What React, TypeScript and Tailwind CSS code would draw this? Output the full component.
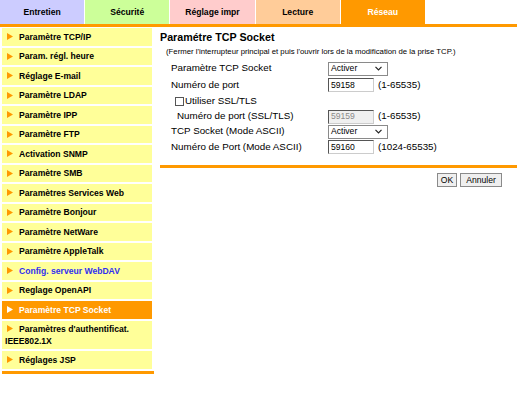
import React from 'react'

const tabs = [
  { label: 'Entretien', bg: 'bg-[#ccccff]', text: 'text-black' },
  { label: 'Sécurité', bg: 'bg-[#ccff99]', text: 'text-black' },
  { label: 'Réglage impr', bg: 'bg-[#ffcccc]', text: 'text-black' },
  { label: 'Lecture', bg: 'bg-[#ffcc99]', text: 'text-black' },
  { label: 'Réseau', bg: 'bg-[#ff9900]', text: 'text-white' },
]

const menu = [
  'Paramètre TCP/IP',
  'Param. régl. heure',
  'Réglage E-mail',
  'Paramètre LDAP',
  'Paramètre IPP',
  'Paramètre FTP',
  'Activation SNMP',
  'Paramètre SMB',
  'Paramètres Services Web',
  'Paramètre Bonjour',
  'Paramètre NetWare',
  'Paramètre AppleTalk',
  'Config. serveur WebDAV',
  'Reglage OpenAPI',
  'Paramètre TCP Socket',
  "Paramètres d'authentificat. IEEE802.1X",
  'Réglages JSP',
]

function Arrow({ white }: { white?: boolean }) {
  return (
    <svg width="6" height="7" viewBox="0 0 6 7" className="inline-block ml-[2px] mr-[6px] align-[-0.5px]">
      <path d="M0 0 L6 3.5 L0 7 Z" fill={white ? '#ffffff' : '#ff9900'} />
    </svg>
  )
}

function Select() {
  return (
    <div className="flex items-center justify-between w-[60px] h-[14px] border border-[#8a8a8a] bg-white pl-[2px] pr-[5px] text-[8.6px] leading-none">
      <span>Activer</span>
      <svg width="7" height="5" viewBox="0 0 7 5">
        <path d="M0.5 0.8 L3.5 3.8 L6.5 0.8" fill="none" stroke="#222" strokeWidth="1.2" />
      </svg>
    </div>
  )
}

function Input({ value, disabled }: { value: string; disabled?: boolean }) {
  return (
    <div
      className={`w-[46px] h-[14px] flex items-center pl-[2px] text-[8.6px] leading-none border border-t-[#555] border-l-[#555] border-r-[#ccc] border-b-[#ccc] ${
        disabled ? 'bg-[#f0f0f0] text-[#8a8a8a]' : 'bg-white text-black'
      }`}
    >
      {value}
    </div>
  )
}

export default function App() {
  return (
    <div className="w-[517px] h-[411px] bg-white font-['Liberation_Sans',Arial,sans-serif] text-black overflow-hidden">
      <div className="flex h-[24px]">
        {tabs.map((t) => (
          <div
            key={t.label}
            className={`w-[84.2px] mr-px flex items-center justify-center text-[8.6px] font-bold ${t.bg} ${t.text}`}
          >
            {t.label}
          </div>
        ))}
      </div>
      <div className="h-[3px] bg-[#ff9900]" />

      <div className="flex">
        <div className="w-[150px] ml-[2px] pt-px">
          {menu.map((m) => {
            const active = m === 'Paramètre TCP Socket'
            const link = m === 'Config. serveur WebDAV'
            const tall = m.includes('IEEE')
            return (
              <div
                key={m}
                className={`mb-[2px] pl-[3px] leading-[12px] text-[8.6px] font-bold ${tall ? 'py-[2.25px]' : 'py-[2.75px]'} ${
                  active ? 'bg-[#ff9900] text-white' : 'bg-[#ffff99]'
                } ${link ? 'text-[#3030f0]' : ''}`}
              >
                <Arrow white={active} />
                {m}
              </div>
            )
          })}
          <div className="mt-[2.5px] h-[3px] bg-[#ff9900] -mr-[2px]" />
        </div>

        <div className="flex-1 ml-[8px]">
          <div className="mt-[4px] h-[13px] leading-[13px] text-[10.7px] font-bold">Paramétre TCP Socket</div>
          <div className="mt-[3px] h-[10px] leading-[10px] pl-[6px] text-[7.75px]">
            (Fermer l'interrupteur principal et puis l'ouvrir lors de la modification de la prise TCP.)
          </div>

          <div className="mt-[3px] text-[9.8px] pl-[11px]">
            <div className="flex items-center h-[17px]">
              <span className="w-[157px]">Paramètre TCP Socket</span>
              <Select />
            </div>
            <div className="flex items-center h-[16px]">
              <span className="w-[157px]">Numéro de port</span>
              <Input value="59158" />
              <span className="ml-[4px]">(1-65535)</span>
            </div>
            <div className="flex items-center h-[16px] pl-[4px]">
              <span className="w-[9px] h-[9px] border border-[#555] bg-white mr-[1px]" />
              <span>Utiliser SSL/TLS</span>
            </div>
            <div className="flex items-center h-[15px]">
              <span className="w-[157px] pl-[6px]">Numéro de port (SSL/TLS)</span>
              <Input value="59159" disabled />
              <span className="ml-[4px]">(1-65535)</span>
            </div>
            <div className="flex items-center h-[15px]">
              <span className="w-[157px]">TCP Socket (Mode ASCII)</span>
              <Select />
            </div>
            <div className="flex items-center h-[16px]">
              <span className="w-[157px]">Numéro de Port (Mode ASCII)</span>
              <Input value="59160" />
              <span className="ml-[4px]">(1024-65535)</span>
            </div>
          </div>

          <div className="mt-[10px] h-[3px] bg-[#ff9900]" />
          <div className="mt-[5px] flex justify-end gap-[3px] pr-[15px]">
            <button className="h-[14px] w-[20px] border border-[#8a8a8a] bg-[#efefef] text-[8.6px] leading-none">OK</button>
            <button className="h-[14px] w-[42px] border border-[#8a8a8a] bg-[#efefef] text-[8.6px] leading-none">Annuler</button>
          </div>
        </div>
      </div>
    </div>
  )
}
